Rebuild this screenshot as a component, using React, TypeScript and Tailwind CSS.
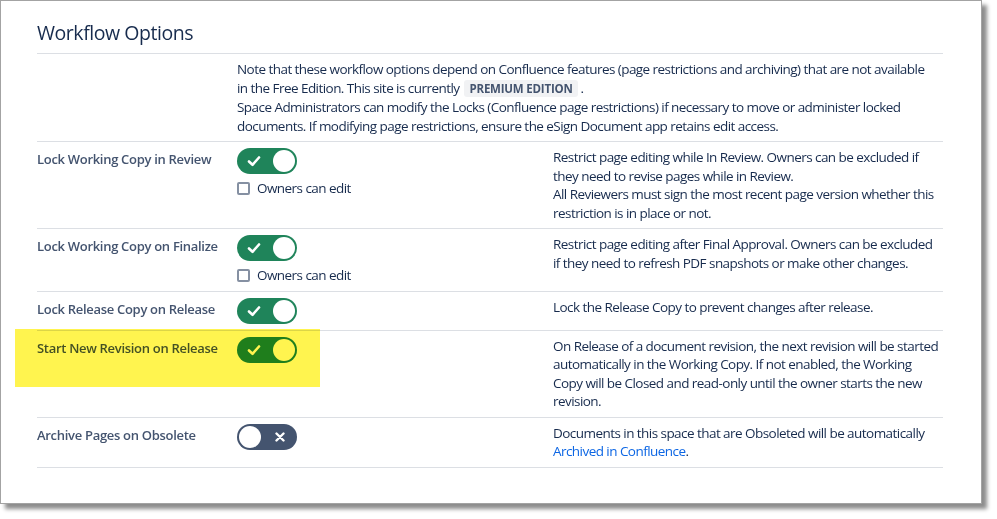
import React from "react";

const FONT = { fontFamily: '"Open Sans", "Noto Sans", Arial, sans-serif' };

function Toggle({ on }: { on: boolean }) {
  if (on) {
    return (
      <div className="relative h-[26px] w-[60px] rounded-full bg-[#1f845a] shrink-0">
        <svg className="absolute left-[10px] top-[7px]" width="14" height="12" viewBox="0 0 14 12">
          <path d="M2 6.5 L5.5 9.8 L12 2.5" fill="none" stroke="white" strokeWidth="2.6" strokeLinecap="round" strokeLinejoin="round" />
        </svg>
        <div className="absolute right-[2px] top-[2px] h-[22px] w-[22px] rounded-full bg-white" />
      </div>
    );
  }
  return (
    <div className="relative h-[26px] w-[60px] rounded-full bg-[#44546f] shrink-0">
      <div className="absolute left-[2px] top-[2px] h-[22px] w-[22px] rounded-full bg-white" />
      <svg className="absolute left-[38px] top-[8px]" width="10" height="10" viewBox="0 0 10 10">
        <path d="M1.5 1.5 L8.5 8.5 M8.5 1.5 L1.5 8.5" fill="none" stroke="white" strokeWidth="2.4" strokeLinecap="round" />
      </svg>
    </div>
  );
}

function OwnersCheck() {
  return (
    <div className="mt-[5px] flex h-[18.5px] items-center">
      <div className="h-[13px] w-[13px] rounded-[2px] border-2 border-[#8590a2] bg-white" />
      <span className="ml-[7px] text-[13.5px] tracking-[-0.55px] text-[#172b4d]">Owners can edit</span>
    </div>
  );
}

function Row({
  label,
  on,
  check,
  desc,
}: {
  label: string;
  on: boolean;
  check?: boolean;
  desc: React.ReactNode;
}) {
  return (
    <div className="flex border-t border-[#dcdfe4] pt-[6px] pb-[6px]">
      <div className="w-[200px] shrink-0">
        <div className="mt-[2px] text-[13px] font-semibold leading-[18.5px] tracking-[-0.3px] text-[#44546f] whitespace-nowrap">{label}</div>
      </div>
      <div className="w-[316px] shrink-0">
        <Toggle on={on} />
        {check && <OwnersCheck />}
      </div>
      <div className="w-[390px] shrink-0 text-[13.5px] leading-[18.5px] tracking-[-0.55px] text-[#172b4d]">{desc}</div>
    </div>
  );
}

function L({ children }: { children: React.ReactNode }) {
  return <div className="whitespace-nowrap">{children}</div>;
}

export default function App() {
  return (
    <div className="h-[519px] w-[997px] bg-white overflow-hidden" style={FONT}>
      <div className="relative h-[504px] w-[982px] border border-[#a3a3a3] bg-white shadow-[5px_5px_4px_rgba(0,0,0,0.45)]">
        <div className="pl-[36px]">
          <div className="w-[906px]">
            <div className="pt-[18px] pb-[6px] text-[19.5px] leading-[28px] tracking-[-0.45px] text-[#172b4d]">Workflow Options</div>
            <div className="flex border-t border-[#dcdfe4] pt-[6px] pb-[6px]">
              <div className="w-[200px] shrink-0" />
              <div className="text-[13.5px] leading-[18.5px] tracking-[-0.55px] text-[#172b4d]">
                <L>Note that these workflow options depend on Confluence features (page restrictions and archiving) that are not available</L>
                <L>
                  in the Free Edition. This site is currently{" "}
                  <span className="ml-[2px] rounded-[3px] bg-[#f1f2f4] px-[5px] py-[1px] text-[11.5px] font-bold tracking-[-0.2px] text-[#44546f]">PREMIUM EDITION</span>{" "}.
                </L>
                <L>Space Administrators can modify the Locks (Confluence page restrictions) if necessary to move or administer locked</L>
                <L>documents. If modifying page restrictions, ensure the eSign Document app retains edit access.</L>
              </div>
            </div>
            <Row
              label="Lock Working Copy in Review"
              on
              check
              desc={
                <>
                  <L>Restrict page editing while In Review. Owners can be excluded if</L>
                  <L>they need to revise pages while in Review.</L>
                  <L>All Reviewers must sign the most recent page version whether this</L>
                  <L>restriction is in place or not.</L>
                </>
              }
            />
            <Row
              label="Lock Working Copy on Finalize"
              on
              check
              desc={
                <>
                  <L>Restrict page editing after Final Approval. Owners can be excluded</L>
                  <L>if they need to refresh PDF snapshots or make other changes.</L>
                </>
              }
            />
            <Row
              label="Lock Release Copy on Release"
              on
              desc={<L>Lock the Release Copy to prevent changes after release.</L>}
            />
            <Row
              label="Start New Revision on Release"
              on
              desc={
                <>
                  <L>On Release of a document revision, the next revision will be started</L>
                  <L>automatically in the Working Copy. If not enabled, the Working</L>
                  <L>Copy will be Closed and read-only until the owner starts the new</L>
                  <L>revision.</L>
                </>
              }
            />
            <Row
              label="Archive Pages on Obsolete"
              on={false}
              desc={
                <>
                  <L>Documents in this space that are Obsoleted will be automatically</L>
                  <L>
                    <span className="text-[#0c66e4]">Archived in Confluence</span>.
                  </L>
                </>
              }
            />
            <div className="border-t border-[#dcdfe4]" />
          </div>
        </div>
        <div className="pointer-events-none absolute left-[14px] top-[328px] h-[58px] w-[305px] bg-[#fff44f] mix-blend-multiply" />
      </div>
    </div>
  );
}
